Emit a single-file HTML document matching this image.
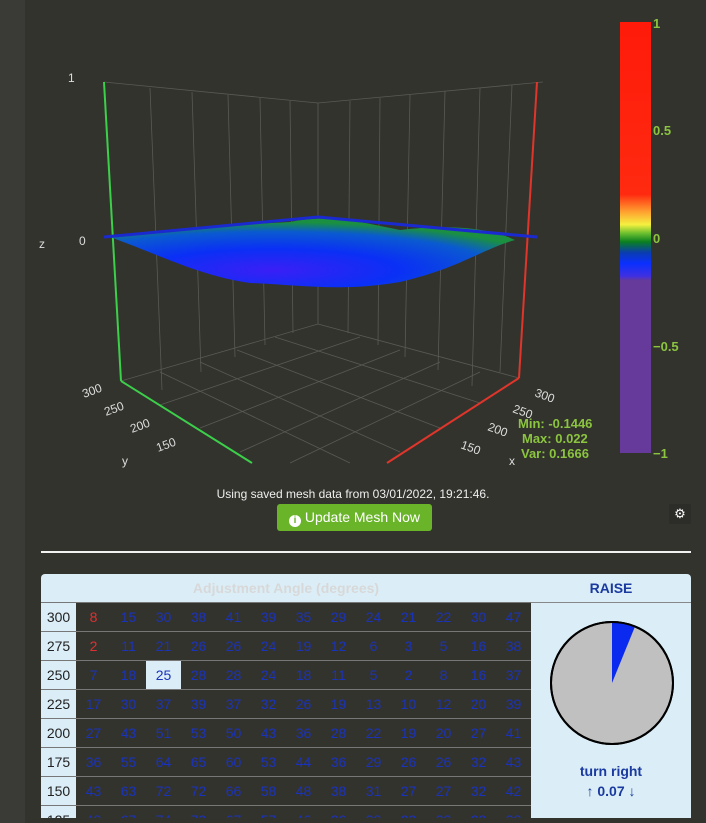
<!DOCTYPE html>
<html style="overflow:hidden"><head><style>
html,body{margin:0;width:706px;height:823px;overflow:hidden}
body{background:#33332e;position:relative;font-family:"Liberation Sans",sans-serif}
.strip{position:absolute;left:0;top:0;width:25px;height:823px;background:#3a3b36}
.abs{position:absolute}
table{border-collapse:collapse}
td{height:28px;border-top:1px solid #777;text-align:center;font-size:14px;color:#1a33bb;width:35px;padding:0}
td.l{background:#dbeef7;color:#222;width:35px}
</style></head><body>
<div class="strip"></div>
<svg class="abs" style="left:0;top:0" width="706" height="470">
<defs>
<linearGradient id="cb" x1="0" y1="0" x2="0" y2="1">
<stop offset="0" stop-color="#ff1a0a"/><stop offset="0.4" stop-color="#ff2a10"/>
<stop offset="0.44" stop-color="#ffa030"/><stop offset="0.47" stop-color="#f5f040"/>
<stop offset="0.49" stop-color="#6cc030"/><stop offset="0.51" stop-color="#0a8020"/>
<stop offset="0.535" stop-color="#0a3cb0"/><stop offset="0.56" stop-color="#0a30ff"/>
<stop offset="0.59" stop-color="#4030e0"/><stop offset="0.6" stop-color="#663a9a"/>
<stop offset="1" stop-color="#663a9a"/></linearGradient>
<radialGradient id="sf" cx="0.4" cy="0.75" r="0.7">
<stop offset="0" stop-color="#3a1ff5"/><stop offset="0.45" stop-color="#0a30f5"/>
<stop offset="0.8" stop-color="#0a5ad0"/><stop offset="1" stop-color="#1a9040"/></radialGradient>
</defs>
<g stroke="#5a5a55" stroke-width="0.8" fill="none">
<path d="M104,82 L318,103 L543,82"/>
<path d="M150,88 L162,390 M192,92 L201,372 M228,95 L235,357 M260,98 L265,345 M290,101 L293,333"/>
<path d="M350,101 L348,333 M380,98 L378,345 M410,95 L405,357 M445,91 L438,370 M480,88 L472,386 M512,85 L500,372"/>
<path d="M318,103 L318,324"/>
<path d="M121,381 L318,324 L519,378"/>
<path d="M160,405 L360,337 M200,428 L400,350 M240,452 L440,362 M290,463 L480,372"/>
<path d="M480,403 L275,337 M440,428 L237,350 M400,452 L200,362 M350,463 L160,372"/>
</g>
<line x1="104" y1="82" x2="121" y2="381" stroke="#3ccf4a" stroke-width="2"/>
<line x1="121" y1="381" x2="252" y2="463" stroke="#3ccf4a" stroke-width="2"/>
<line x1="537" y1="82" x2="519" y2="378" stroke="#e0352a" stroke-width="2"/>
<line x1="519" y1="378" x2="387" y2="463" stroke="#e0352a" stroke-width="2"/>
<path d="M110,237 C170,230 230,225 290,222 C330,214 360,222 400,230 C450,224 490,228 515,240 C480,250 460,268 400,282 C340,292 300,285 250,283 C200,276 160,255 110,237Z" fill="url(#sf)"/>
<path d="M104,237 L318,217 L537,237" stroke="#1a2ad0" stroke-width="3" fill="none"/>
<g fill="#ddd" font-size="12" font-family="Liberation Sans,sans-serif">
<text x="68" y="82">1</text><text x="39" y="248">z</text><text x="79" y="245">0</text>
<text x="84" y="398" transform="rotate(-20 84 398)">300</text>
<text x="106" y="416" transform="rotate(-20 106 416)">250</text>
<text x="132" y="433" transform="rotate(-20 132 433)">200</text>
<text x="158" y="452" transform="rotate(-20 158 452)">150</text>
<text x="122" y="465">y</text>
<text x="534" y="396" transform="rotate(20 534 396)">300</text>
<text x="512" y="412" transform="rotate(20 512 412)">250</text>
<text x="487" y="430" transform="rotate(20 487 430)">200</text>
<text x="460" y="448" transform="rotate(20 460 448)">150</text>
<text x="509" y="465">x</text>
</g>
<rect x="620" y="22" width="31" height="431" fill="url(#cb)"/>
<g fill="#8bc53f" font-size="13" font-weight="bold" font-family="Liberation Sans,sans-serif">
<text x="653" y="28">1</text><text x="653" y="135">0.5</text><text x="653" y="243">0</text>
<text x="653" y="351">−0.5</text><text x="653" y="458">−1</text>
<text x="518" y="428">Min: -0.1446</text><text x="522" y="443">Max: 0.022</text><text x="521" y="458">Var: 0.1666</text>
</g>
</svg>
<div class="abs" style="left:0;width:706px;top:487px;text-align:center;color:#eee;font-size:12px">Using saved mesh data from 03/01/2022, 19:21:46.</div>
<div class="abs" style="left:277px;top:504px;width:155px;height:27px;background:#6ab42a;border-radius:3px;color:#fff;font-size:14px;line-height:27px;text-align:center"><span style="display:inline-block;width:12px;height:12px;border-radius:50%;background:#fff;color:#6ab42a;font-size:10px;line-height:12px;font-weight:bold;vertical-align:-1px">i</span> Update Mesh Now</div>
<div class="abs" style="left:669px;top:504px;width:22px;height:20px;background:#2c2c28;border-radius:2px;color:#fff;font-size:13px;line-height:20px;text-align:center">⚙</div>
<div class="abs" style="left:41px;top:551px;width:650px;height:2px;background:#f2f2f2"></div>
<div class="abs" style="left:41px;top:574px;width:650px;height:244px;background:#dbeef7;border-radius:4px 4px 0 0;overflow:hidden">
<div class="abs" style="left:0;top:0;width:490px;height:28px;line-height:28px;text-align:center;color:#d8d8d8;font-weight:bold;font-size:14px">Adjustment Angle (degrees)</div>
<div class="abs" style="left:490px;top:0;width:160px;height:28px;line-height:28px;text-align:center;color:#1a3aa0;font-weight:bold;font-size:14px;border-bottom:1px solid #888">RAISE</div>
<table class="abs" style="left:0;top:28px;background:#33332e">
<tr><td class="l">300</td><td style="color:#e03030">8</td><td>15</td><td>30</td><td>38</td><td>41</td><td>39</td><td>35</td><td>29</td><td>24</td><td>21</td><td>22</td><td>30</td><td>47</td></tr>
<tr><td class="l">275</td><td style="color:#e03030">2</td><td>11</td><td>21</td><td>26</td><td>26</td><td>24</td><td>19</td><td>12</td><td>6</td><td>3</td><td>5</td><td>16</td><td>38</td></tr>
<tr><td class="l">250</td><td>7</td><td>18</td><td style="background:#dbeef7">25</td><td>28</td><td>28</td><td>24</td><td>18</td><td>11</td><td>5</td><td>2</td><td>8</td><td>16</td><td>37</td></tr>
<tr><td class="l">225</td><td>17</td><td>30</td><td>37</td><td>39</td><td>37</td><td>32</td><td>26</td><td>19</td><td>13</td><td>10</td><td>12</td><td>20</td><td>39</td></tr>
<tr><td class="l">200</td><td>27</td><td>43</td><td>51</td><td>53</td><td>50</td><td>43</td><td>36</td><td>28</td><td>22</td><td>19</td><td>20</td><td>27</td><td>41</td></tr>
<tr><td class="l">175</td><td>36</td><td>55</td><td>64</td><td>65</td><td>60</td><td>53</td><td>44</td><td>36</td><td>29</td><td>26</td><td>26</td><td>32</td><td>43</td></tr>
<tr><td class="l">150</td><td>43</td><td>63</td><td>72</td><td>72</td><td>66</td><td>58</td><td>48</td><td>38</td><td>31</td><td>27</td><td>27</td><td>32</td><td>42</td></tr>
<tr><td class="l">125</td><td>48</td><td>67</td><td>74</td><td>73</td><td>67</td><td>57</td><td>46</td><td>36</td><td>28</td><td>23</td><td>23</td><td>28</td><td>38</td></tr>
</table>
<svg class="abs" style="left:508px;top:46px" width="130" height="130">
<circle cx="63" cy="63" r="61" fill="#c0c0c0" stroke="#000" stroke-width="2"/>
<path d="M63,63 L63,2 A61,61 0 0 1 86,6.5 Z" fill="#0a2af0"/>
<circle cx="63" cy="63" r="61" fill="none" stroke="#000" stroke-width="2"/>
</svg>
<div class="abs" style="left:490px;top:187px;width:160px;text-align:center;color:#1a3aa0;font-weight:bold;font-size:14px;line-height:20px">turn right<br>↑ 0.07 ↓</div>
</div>
</body></html>
